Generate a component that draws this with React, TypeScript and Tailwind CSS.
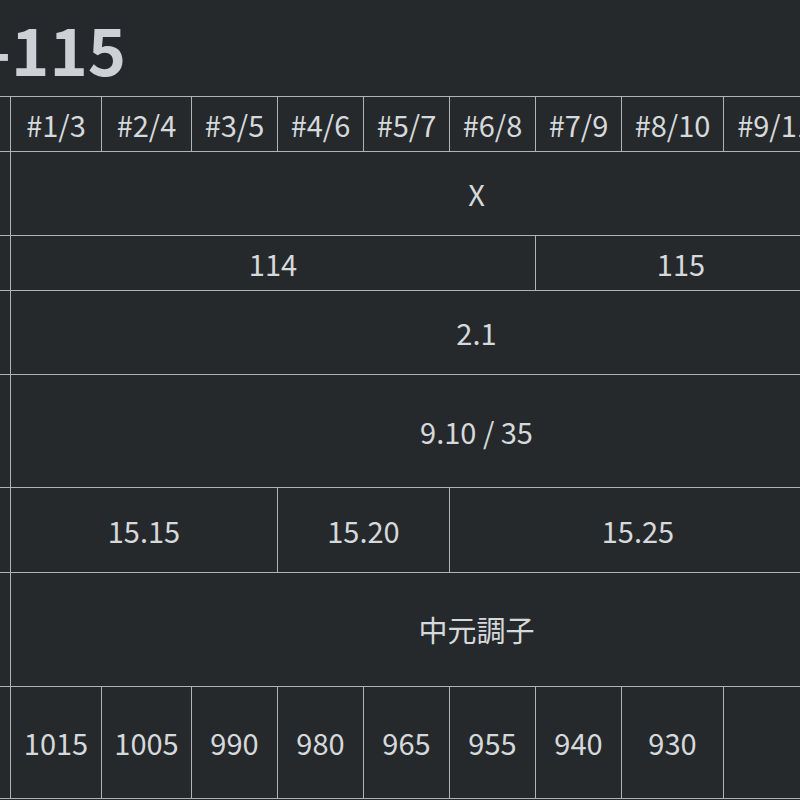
const widths = [150, 91, 90, 86, 86, 86, 86, 86, 102, 103, 116];

const heads = ["#1/3", "#2/4", "#3/5", "#4/6", "#5/7", "#6/8", "#7/9", "#8/10", "#9/11", "#10/12"];
const bores = ["1015", "1005", "990", "980", "965", "955", "940", "930", "", ""];

const cell = "border border-[#b0b3b5] text-center align-middle p-0";

export default function App() {
  return (
    <div
      className="min-h-screen w-full overflow-hidden bg-[#25292c] text-[#d6d9dc]"
      style={{ fontFamily: '"Noto Sans CJK JP", "Noto Sans", sans-serif' }}
    >
      <h1 className="h-[96px] ml-[-13px] pt-[2px] text-[65px] leading-[92px] font-bold text-[#cdd0d4] whitespace-nowrap">
        -115
      </h1>

      <table className="ml-[-140px] w-[1082px] min-w-[1082px] table-fixed border-collapse text-[29px] leading-none">
        <colgroup>
          {widths.map((w, i) => (
            <col key={i} style={{ width: w }} />
          ))}
        </colgroup>
        <tbody>
          <tr className="h-[55px]">
            <td className={cell}></td>
            {heads.map((h) => (
              <td key={h} className={cell}>
                {h}
              </td>
            ))}
          </tr>
          <tr className="h-[84px]">
            <td className={cell}></td>
            <td colSpan={10} className={cell}>
              X
            </td>
          </tr>
          <tr className="h-[55px]">
            <td className={cell}></td>
            <td colSpan={6} className={cell}>
              114
            </td>
            <td colSpan={3} className={cell}>
              115
            </td>
            <td className={cell}></td>
          </tr>
          <tr className="h-[84px]">
            <td className={cell}></td>
            <td colSpan={10} className={cell}>
              2.1
            </td>
          </tr>
          <tr className="h-[113px]">
            <td className={cell}></td>
            <td colSpan={10} className={cell}>
              9.10 / 35
            </td>
          </tr>
          <tr className="h-[85px]">
            <td className={cell}></td>
            <td colSpan={3} className={cell}>
              15.15
            </td>
            <td colSpan={2} className={cell}>
              15.20
            </td>
            <td colSpan={4} className={cell}>
              15.25
            </td>
            <td className={cell}></td>
          </tr>
          <tr className="h-[114px]">
            <td className={cell}></td>
            <td colSpan={10} className={cell}>
              中元調子
            </td>
          </tr>
          <tr className="h-[112px]">
            <td className={cell}></td>
            {bores.map((b, i) => (
              <td key={i} className={cell}>
                {b}
              </td>
            ))}
          </tr>
        </tbody>
      </table>
    </div>
  );
}
